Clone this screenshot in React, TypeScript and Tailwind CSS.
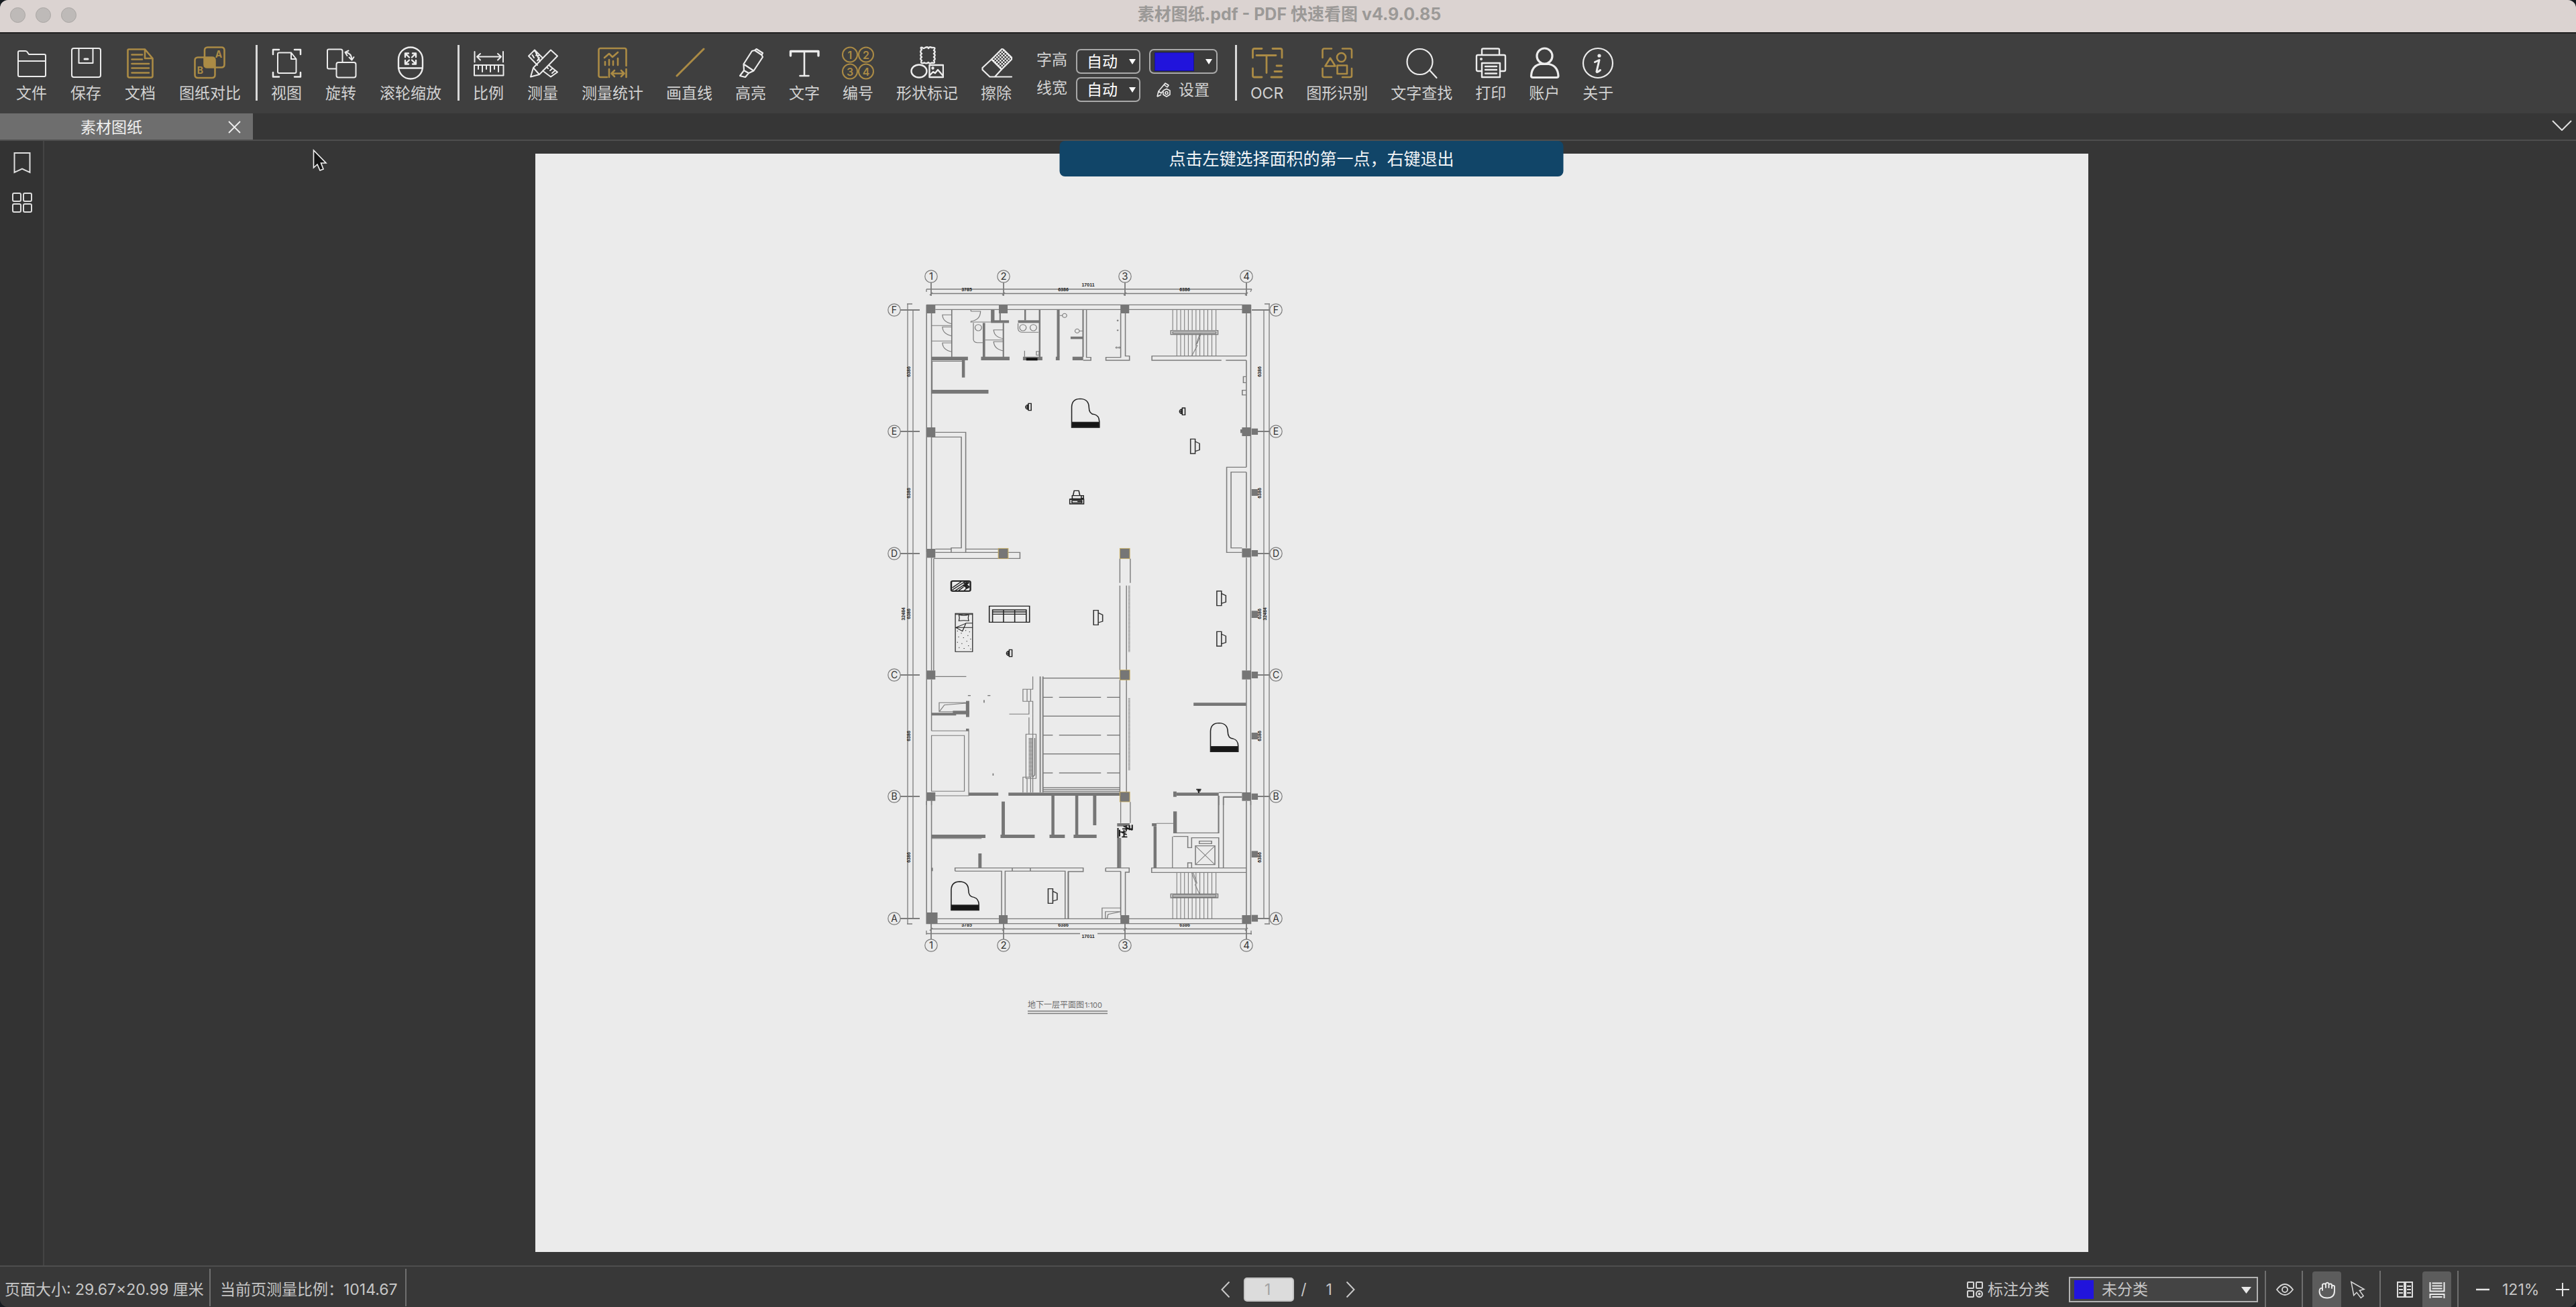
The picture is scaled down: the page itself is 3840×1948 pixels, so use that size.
import React from "react";

const GOLD = "#ab8b45";
const INK = "#ececec";

type IconProps = { color?: string; width?: number; children: React.ReactNode };

function Icon({ color = INK, width = 2, children }: IconProps) {
  return (
    <svg
      viewBox="0 0 50 50"
      className="-mx-0.5 size-[50px] shrink-0"
      fill="none"
      stroke={color}
      strokeWidth={width}
      strokeLinecap="round"
      strokeLinejoin="round"
      aria-hidden="true"
    >
      {children}
    </svg>
  );
}

function Tool({ label, children }: { label: string; children: React.ReactNode }) {
  return (
    <button type="button" className="flex min-w-[46px] shrink-0 flex-col items-center gap-1.5 whitespace-nowrap">
      {children}
      <span className="text-[23px] leading-7">{label}</span>
    </button>
  );
}

function Separator() {
  return <div className="h-[83px] w-[3px] shrink-0 bg-[#d9d9d9]" />;
}

function AutoSelect({ label }: { label: string }) {
  return (
    <label className="flex h-[37px] items-center gap-[13px]">
      <span className="pb-1.5 text-[23px] leading-7">{label}</span>
      <span className="relative">
        <select className="block h-[37px] w-24 appearance-none rounded-[7px] border-2 border-[#a9a9a9] bg-[#3b3b3b] pl-3.5 text-[23px] leading-7 text-white">
          <option>自动</option>
        </select>
        <svg viewBox="0 0 10 8" className="pointer-events-none absolute top-[15px] right-[7px] h-2 w-2.5" fill="#fff">
          <path d="M0 0h10L5 8z" />
        </svg>
      </span>
    </label>
  );
}

function Toolbar() {
  return (
    <div className="flex h-[119px] shrink-0 items-start bg-[#3f3f3f] pt-[17px] pl-6 text-[#d2d2d2]">
      <div className="mt-0.5 flex gap-[35px]">
        <Tool label="文件">
          <Icon>
            <path d="M5 43V9Q5 7 7 7H16Q18 7 19 9L21 12H44Q46 12 46 14V43Q46 45 44 45H7Q5 45 5 43ZM5 22H46" />
          </Icon>
        </Tool>
        <Tool label="保存">
          <Icon>
            <rect x="4" y="3" width="43" height="43" rx="3" />
            <path d="M14.5 3V25H35.5V3" />
            <path d="M23 19H28" strokeWidth="3" />
          </Icon>
        </Tool>
        <Tool label="文档">
          <Icon color={GOLD} width={2.6}>
            <path d="M8 4.500H32L43.500 18V44Q43.500 46.500 41 46.500H9Q6.500 46.500 6.500 44V6Q6.500 4.500 8 4.500ZM32 4.500V18H43.500M12.500 12.500H28M12.500 19.500H28M12.500 26H38M12.500 32.500H38M12.500 39.500H38" />
          </Icon>
        </Tool>
        <Tool label="图纸对比">
          <Icon color={GOLD} width={2.6}>
            <path d="M17 16V6Q17 1.500 21.500 1.500H42Q46.500 1.500 46.500 6V27Q46.500 31.500 42 31.500H33" />
            <path d="M16 16.500H7Q2.500 16.500 2.500 21V42.500Q2.500 47 7 47H28Q32.500 47 32.500 42.500V32" />
            <path d="M16.500 16.500H28Q32.500 16.500 32.500 21V31.500H21Q16.500 31.500 16.500 27Z" fill={GOLD} />
            <g fill={GOLD} stroke="none" fontSize="14" fontWeight="700" textAnchor="middle">
              <text x="38" y="17">A</text>
              <text x="10.500" y="41">B</text>
            </g>
          </Icon>
        </Tool>
      </div>
      <div className="w-[22px] shrink-0" />
      <Separator />
      <div className="mt-0.5 ml-5 flex gap-[35px]">
        <Tool label="视图">
          <Icon>
            <path d="M5 12V5H14M37 5H46V12M46 39V45.500H37M14 45.500H5V39" strokeWidth="2.500" />
            <path d="M14 9.500H32L39.500 19V38Q39.500 40 37.500 40H14Q12 40 12 38V11.500Q12 9.500 14 9.500ZM32 9.500V19H39.500" />
          </Icon>
        </Tool>
        <Tool label="旋转">
          <Icon>
            <path d="M18 33.500H7Q5 33.500 5 31.500V6.500Q5 4.500 7 4.500H25Q27.500 4.500 27.500 7V23" />
            <rect x="18.500" y="24" width="29" height="22.500" rx="3" />
            <path d="M32 9Q41 10 41.500 20M36.500 6.500L31.500 9L34.500 14M37.500 16.500L41.500 20.500L44.500 16" />
          </Icon>
        </Tool>
        <Tool label="滚轮缩放">
          <Icon width={2.4}>
            <rect x="7" y="1.500" width="36" height="47" rx="18" />
            <path d="M7 32.500H43M17 16V10.500H22M17.500 11L23 16.500M33 16V10.500H28M32.500 11L27 16.500M17 21V26.500H22M17.500 26L23 20.500M33 21V26.500H28M32.500 26L27 20.500" />
          </Icon>
        </Tool>
      </div>
      <div className="w-6 shrink-0" />
      <Separator />
      <div className="mt-0.5 ml-5 flex gap-[35px]">
        <Tool label="比例">
          <Icon>
            <path d="M4.500 8V23.500M47 8V23.500M8 15.500H44M13 11L8 15.500L13 20.500M39 11L44 15.500L39 20.500M4 28H47.500V43.500H4ZM10 28V34M16 28V38M22 28V34M28 28V38M34 28V34M40 28V38" />
          </Icon>
        </Tool>
        <Tool label="测量">
          <Icon>
            <path d="M37 5.500L47 14.500L20 42L7 45.500L11 32ZM11 32L20 42" />
            <path d="M21 22.500L13 5.500L4 14.500L17 28M25 17.500L13 5.500M12 17L9.500 13M15 13.500L19 14M17 21.500L20 17M34 28L47 38.500L37 45.500L25 36.500M33 33L31 31M36 36L39 33.500M39 40L43 36.500" />
          </Icon>
        </Tool>
        <Tool label="测量统计">
          <Icon color={GOLD} width={2.6}>
            <path d="M17 46H7Q4.500 46 4.500 43.500V5.500Q4.500 3 7 3H43Q45.500 3 45.500 5.500V29" />
            <path d="M13 17L20 11L25 16L33 9M14 23V28M20 20V28M26 22V28M33 18V28M20 34V46M45.500 34V46M24 40.500H42M28 36L23.500 40.500L28 45M38 36L42.500 40.500L38 45" />
          </Icon>
        </Tool>
      </div>
      <div className="mt-0.5 ml-[34px] flex gap-[34px]">
        <Tool label="画直线">
          <Icon color={GOLD} width={3}>
            <path d="M6 44L46 4" />
          </Icon>
        </Tool>
        <Tool label="高亮">
          <Icon width={2.2}>
            <path d="M31 6L41.500 13L43 16L29.500 36.500L14.500 26.500L27 7ZM31 6L33.500 4L43 10L41.500 13M14.500 26.500L15 36L22 40L29.500 36.500M15 36L9 44L17 46L22 40" />
          </Icon>
        </Tool>
        <Tool label="文字">
          <Icon width={2.6}>
            <path d="M18.500 44H31.500M25 8V44" />
            <path d="M4.500 14V7.500H46V14" strokeWidth="3.400" />
          </Icon>
        </Tool>
        <Tool label="编号">
          <Icon color={GOLD}>
            <circle cx="13" cy="12.500" r="11" />
            <circle cx="37" cy="12.500" r="11" />
            <circle cx="13" cy="37.500" r="11" />
            <circle cx="37" cy="37.500" r="11" />
            <g fill={GOLD} stroke="none" fontSize="16" fontWeight="600" textAnchor="middle">
              <text x="13" y="18.500">1</text>
              <text x="37" y="18.500">2</text>
              <text x="13" y="43.500">3</text>
              <text x="37" y="43.500">4</text>
            </g>
          </Icon>
        </Tool>
        <Tool label="形状标记">
          <Icon width={2.4}>
            <path d="M17 5Q14 1 18 2Q20 4 22 2Q26 0 27 3Q29 0 32 2Q39 1 35 6Q38.500 8 35 11Q38.500 13 35 16Q38.500 19 35 21Q38 26 32 24.500Q29 26.500 27 24Q24 26.500 21 24.500Q14 26.500 17 21Q13.500 19 17 16Q13.500 13 17 11Q13.500 8 17 5Z" />
            <ellipse cx="13" cy="37" rx="11.500" ry="9.500" />
            <rect x="28.500" y="28" width="20.500" height="18" />
            <path d="M29 43L34 38L37 40L41 35L48 43" />
            <circle cx="33.500" cy="32.500" r="1" />
          </Icon>
        </Tool>
        <Tool label="擦除">
          <Icon width={2.2}>
            <defs>
              <pattern id="eraser" width="5" height="5" patternUnits="userSpaceOnUse">
                <path d="M0 0h2.500v2.500h-2.500zM2.500 2.500h2.500v2.500h-2.500z" fill={INK} stroke="none" />
              </pattern>
            </defs>
            <path d="M33.500 4L18 19.500L33 34.500L48 19.500V16.500L35.500 4.500Z" fill="url(#eraser)" />
            <path d="M18 19.500L4.500 32V35L15.500 45.500H48M33 34.500L23 45.500" />
          </Icon>
        </Tool>
      </div>
      <div className="mt-1.5 ml-[37px] flex shrink-0 gap-[13px] whitespace-nowrap">
        <div className="flex flex-col gap-[5px]">
          <AutoSelect label="字高" />
          <AutoSelect label="线宽" />
        </div>
        <div className="flex flex-col gap-[5px]">
          <button
            type="button"
            aria-label="颜色"
            className="flex h-[37px] w-[102px] items-center justify-between rounded-[7px] border-2 border-[#a9a9a9] bg-[#3b3b3b] pr-1.5 pl-1.5"
          >
            <span className="h-7 w-[59px] border border-[#15128c] bg-[#2114dc]" />
            <svg viewBox="0 0 10 8" className="h-2 w-2.5" fill="#fff">
              <path d="M0 0h10L5 8z" />
            </svg>
          </button>
          <button type="button" className="flex h-[37px] items-center gap-2.5 pl-2.5">
            <svg viewBox="0 0 24 24" className="size-6" fill="none" stroke={INK} strokeWidth="1.600" strokeLinejoin="round">
              <path d="M2 22L4 14L14 2L19 5L17 8M4 14L8 17L10 14M2 22L8 19M12 4L17 8" />
              <path d="M16 10.500L21 13V19L16 22L11 19V13Z" />
              <circle cx="16" cy="16.500" r="2" />
            </svg>
            <span className="text-[23px] leading-7">设置</span>
          </button>
        </div>
      </div>
      <div className="w-[26px] shrink-0" />
      <Separator />
      <div className="mt-0.5 ml-5 flex gap-[34px]">
        <Tool label="OCR">
          <Icon color={GOLD} width={2.8}>
            <path d="M3.500 17V6Q3.500 3.500 6 3.500H17M33 3.500H44.500Q47 3.500 47 6V17M3.500 33V44Q3.500 46 6 46H17M9 13.500H38M24 13.500V39.500M39 29H46.500M36 37.500H46.500M31 46H47" />
          </Icon>
        </Tool>
        <Tool label="图形识别">
          <Icon color={GOLD} width={2.6}>
            <path d="M3.500 17V6Q3.500 3.500 6 3.500H17M33 3.500H44.500Q47 3.500 47 6V17M3.500 33V44Q3.500 46 6 46H17M33 46H44.500Q47 46 47 44V33M15 17.500L22.500 29.500H7.500Z" />
            <circle cx="31.500" cy="16.500" r="6.500" />
            <rect x="25.500" y="28.500" width="14.500" height="12.500" />
          </Icon>
        </Tool>
        <Tool label="文字查找">
          <Icon width={2.2}>
            <circle cx="22.500" cy="23" r="19" />
            <path d="M37 35.500L47.500 47" />
          </Icon>
        </Tool>
        <Tool label="打印">
          <Icon width={2.4}>
            <path d="M12 13V5Q12 3.500 14 3.500H36Q38 3.500 38 5V13M12 37H6Q4 37 4 35V15Q4 13 6 13H45Q47 13 47 15V35Q47 37 45 37H39M12 25H39V46H12ZM17 30H34M17 35H34M17 40.500H34" />
            <circle cx="11" cy="19" r="0.800" />
          </Icon>
        </Tool>
        <Tool label="账户">
          <Icon width={3.2}>
            <circle cx="25.500" cy="14.500" r="11.500" />
            <path d="M19 26.500H32Q45 29 46 44Q46 46.500 43.500 46.500H8Q5.500 46.500 5.500 44Q6.500 29 19 26.500Z" />
          </Icon>
        </Tool>
        <Tool label="关于">
          <Icon width={2.2}>
            <circle cx="25" cy="25" r="22" />
            <circle cx="27" cy="14" r="2.600" fill={INK} stroke="none" />
            <path d="M20.500 23.500L27 20.500L23 37.500Q23 40 28.500 35.500" strokeWidth="3" />
          </Icon>
        </Tool>
      </div>
    </div>
  );
}

/* ---------- floor plan ---------- */

const WALL = "#7c7c7c";

function Piano({ x, y }: { x: number; y: number }) {
  return (
    <g transform={`translate(${x} ${y})`} stroke="#222">
      <path d="M1 129V38Q2 1 32 1Q63 2 64 38Q64 70 84 71Q101 76 102 103V129Z" />
      <rect x="2" y="106" width="99" height="22" fill="#161616" />
    </g>
  );
}

function Stool({ x, y }: { x: number; y: number }) {
  return (
    <g transform={`translate(${x} ${y})`} stroke="#222">
      <path d="M10 1H20V32H10ZM10 6Q0 8 0 17Q0 26 10 28M10 17H2M7 9V26" />
    </g>
  );
}

function Screen({ x, y }: { x: number; y: number }) {
  return (
    <g transform={`translate(${x} ${y})`} stroke="#333">
      <path d="M0 0H17V65H0ZM17 11L33 20V49L17 55" />
    </g>
  );
}

type Box = [number, number, number, number];

function Solids({ boxes }: { boxes: Box[] }) {
  return (
    <g fill="#767676" stroke="none">
      {boxes.map(([x, y, w, h]) => (
        <rect key={`${x}-${y}`} x={x} y={y} width={w} height={h} />
      ))}
    </g>
  );
}

function GoldColumns({ boxes }: { boxes: Box[] }) {
  return (
    <g fill="#767676" stroke="#c9ad5c" strokeWidth="2.400">
      {boxes.map(([x, y, w, h]) => (
        <rect key={`${x}-${y}`} x={x} y={y} width={w} height={h} />
      ))}
    </g>
  );
}

const stairXs = [1113, 1127, 1141, 1155, 1169, 1183, 1197, 1212, 1226, 1241];
const stairs = (xs: number[], from: number, to: number) => xs.map((x) => `M${x} ${from}V${to}`).join("");

const northSolids: Box[] = [
  [199, 193, 32, 38], [463, 193, 32, 38], [907, 193, 32, 38], [1351, 193, 32, 38],
  [199, 741, 32, 44], [1351, 741, 32, 39], [1386, 746, 23, 28], [1345, 750, 8, 16],
  [1386, 1017, 23, 30], [199, 1284, 32, 40], [1351, 1282, 32, 40], [1386, 1290, 23, 28],
  [434, 214, 13, 55], [465, 214, 5, 50], [434, 262, 66, 12], [404, 274, 9, 152],
  [533, 262, 80, 12], [556, 214, 6, 48], [609, 214, 6, 212], [675, 214, 10, 212],
  [217, 425, 133, 16], [398, 425, 104, 16], [551, 425, 71, 16], [671, 425, 14, 16],
  [732, 425, 39, 16], [725, 335, 45, 11], [768, 214, 5, 212], [328, 441, 11, 77],
  [217, 573, 208, 17], [477, 274, 5, 152], [289, 214, 4, 212],
];

const middleSolids: Box[] = [
  [199, 598, 32, 40], [1351, 598, 32, 40], [1386, 603, 23, 30], [1386, 331, 23, 32],
  [1386, 876, 23, 30], [199, 1143, 32, 38], [1351, 1143, 32, 38], [1386, 1148, 23, 28],
  [343, 734, 12, 72], [217, 787, 90, 12], [295, 778, 60, 16], [343, 858, 11, 10],
  [353, 1144, 108, 14], [498, 1144, 407, 14], [1174, 742, 192, 14],
  [1100, 1139, 12, 24], [1112, 1144, 154, 14], [625, 630, 280, 4], [625, 800, 280, 4],
  [625, 969, 280, 4], [625, 1120, 280, 4], [625, 1129, 280, 4], [625, 716, 35, 4], [683, 716, 153, 4],
  [858, 716, 47, 4], [625, 885, 35, 4], [683, 885, 153, 4], [858, 885, 47, 4],
  [625, 1054, 35, 4], [683, 1054, 153, 4], [858, 1054, 47, 4],
  [350, 708, 10, 4], [422, 708, 10, 4], [407, 730, 4, 12], [440, 1058, 4, 10],
];

const southSolids: Box[] = [
  [199, 660, 40, 50], [463, 672, 32, 38], [907, 672, 32, 38], [1351, 672, 32, 38],
  [1386, 671, 23, 30], [1386, 385, 23, 29], [473, 164, 12, 150], [655, 138, 11, 175],
  [742, 138, 11, 175], [807, 138, 12, 132], [217, 312, 197, 15], [469, 312, 125, 15],
  [648, 312, 56, 15], [736, 312, 84, 15], [388, 396, 12, 65], [217, 460, 5, 15],
  [895, 261, 46, 14], [895, 325, 11, 136], [1022, 261, 17, 13], [1028, 274, 11, 187],
  [1100, 208, 13, 98], [1263, 138, 5, 168], [906, 476, 4, 196], [714, 476, 5, 212],
];

const axes = [
  { name: "F", y: 462 }, { name: "E", y: 643 }, { name: "D", y: 825 },
  { name: "C", y: 1006 }, { name: "B", y: 1187 }, { name: "A", y: 1369 },
];
const columns = [
  { name: "1", x: 1388 }, { name: "2", x: 1496 }, { name: "3", x: 1677 }, { name: "4", x: 1858 },
];
const spans = [{ t: "3785", x: 1441 }, { t: "6386", x: 1585 }, { t: "6386", x: 1766 }];
const bays = [554, 735, 915, 1097, 1278];

function FloorPlan() {
  return (
    <svg viewBox="798 229 2315 1637" className="block size-full" fill="none" stroke={WALL} role="img" aria-label="地下一层平面图">
      <g strokeWidth="1.500">
        {columns.map((c) => (
          <g key={c.name}>
            <circle cx={c.x} cy="412" r="9.200" strokeWidth="1.200" />
            <circle cx={c.x} cy="1409" r="9.200" strokeWidth="1.200" />
            <path d={`M${c.x} 421V441M${c.x} 1377V1400`} strokeWidth="1.800" />
            <path d={`M${c.x - 2} 440l4-4M${c.x - 2} 1387l4-4`} />
          </g>
        ))}
        {axes.map((a) => (
          <g key={a.name}>
            <circle cx="1333" cy={a.y} r="9.200" strokeWidth="1.200" />
            <circle cx="1902" cy={a.y} r="9.200" strokeWidth="1.200" />
            <path d={`M1342 ${a.y}H1371M1866 ${a.y}H1893`} strokeWidth="1.800" />
          </g>
        ))}
        <path
          d="M1381 431H1866M1381 431V435M1866 431L1864 435M1388 437.500H1858M1388 1384.500H1858M1381 1391.500H1610M1636 1391.500H1866M1381 1387V1393M1865 1387V1393M1353 453V1377M1352 453H1360M1352 1377H1360M1361 461V1370M1884 461V1370M1892 453V1377M1885 453H1893M1885 1377H1893"
          strokeWidth="1.300"
        />
      </g>
      <g fill="#333" stroke="none" textAnchor="middle" fontSize="15">
        {columns.map((c) => (
          <React.Fragment key={c.name}>
            <text x={c.x} y="417">{c.name}</text>
            <text x={c.x} y="1414">{c.name}</text>
          </React.Fragment>
        ))}
        {axes.map((a) => (
          <React.Fragment key={a.name}>
            <text x="1333" y={a.y + 5} fontSize="14">{a.name}</text>
            <text x="1902" y={a.y + 5} fontSize="14">{a.name}</text>
          </React.Fragment>
        ))}
      </g>
      <g fill="#222" stroke="none" textAnchor="middle" fontSize="7" fontWeight="700" fontFamily="'Liberation Sans', sans-serif">
        {spans.map((s) => (
          <React.Fragment key={s.x}>
            <text x={s.x} y="434">{s.t}</text>
            <text x={s.x} y="1381">{s.t}</text>
          </React.Fragment>
        ))}
        <text x="1622" y="427">17011</text>
        <text x="1622" y="1398">17011</text>
        {bays.map((y) => (
          <React.Fragment key={y}>
            <text transform={`translate(1357 ${y}) rotate(-90)`}>6386</text>
            <text transform={`translate(1880 ${y}) rotate(-90)`}>6386</text>
          </React.Fragment>
        ))}
        <text transform="translate(1349 915) rotate(-90)">32484</text>
        <text transform="translate(1888 915) rotate(-90)">32484</text>
      </g>

      <g transform="translate(1300 390) scale(0.40816 0.33333)" strokeWidth="3.800">
        <path d="M199 193H1383M231 214H1367M199 193V1300M217 231V1284M1383 193V1300M1367 231V422M1367 441V919M1367 941V1280" />
        <path
          d="M217 286H291M217 355H291M291 238H257Q258 270 291 278M291 292H257Q258 324 291 332M291 363H257Q258 395 291 403M361 222H396Q395 262 361 266M361 214V222M361 266V272M361 270H434M370 274V348Q372 362 384 362H404M413 350H480M480 305H444Q446 338 480 344M480 358H444Q446 392 480 399M533 276V300Q535 316 550 316H608M685 241H695M757 310H769M557 398V425M600 401H610V418H600Z"
          strokeWidth="3"
        />
        <g strokeWidth="3">
          <ellipse cx="388" cy="295" rx="12" ry="14" />
          <ellipse cx="551" cy="295" rx="12" ry="14" />
          <ellipse cx="589" cy="295" rx="12" ry="14" />
          <ellipse cx="703" cy="241" rx="8" ry="9" />
          <ellipse cx="749" cy="310" rx="8" ry="9" />
          <ellipse cx="897" cy="263" rx="2" ry="2" />
          <ellipse cx="897" cy="307" rx="2" ry="2" />
          <ellipse cx="893" cy="384" rx="3" ry="3" />
          <ellipse cx="903" cy="384" rx="3" ry="3" />
        </g>
        <path d="M783 214V428H799V441H771M908 231V428H854V441H940V422H925V231M1367 422H1022V441H1276M1292 441H1367M217 445H330M219 445V574M1366 514H1356V541H1366M1367 575H1352V596H1367" />
        <path d={stairs([1098, ...stairXs, 1256], 214, 308) + stairs([...stairXs, 1256], 327, 420)} strokeWidth="2.600" />
        <path d="M1091 308H1263V326H1091ZM1098 314H1256V321H1098Z" />
        <path d="M1197 322L1183 372L1188 375L1168 420M1201 322L1187 368" strokeWidth="2.600" />
        <path d="M231 763H342V1300M217 784H326V1280H289V1300M231 1285H289M342 1285H463M231 1300H461M497 1300H540V1327H225M1367 919H1295V1300H1351M1367 941H1311V1280H1351" />
        <Solids boxes={northSolids} />
        <GoldColumns boxes={[[461, 1282, 36, 46], [905, 1282, 36, 46]]} />
        <rect x="563" y="430" width="41" height="12" fill="#111" stroke="none" />
        <Piano x={728} y={612} />
        <Stool x={561} y={633} />
        <Stool x={1123} y={653} />
        <Screen x={1163} y={793} />
        <g stroke="#222">
          <path d="M738 1024H755L759 1046H734ZM731 1046H764V1060H731ZM722 1062H773V1083H722ZM764 1046H772V1058H764M730 1068H766V1078H730Z" />
          <path d="M724 1062H770M750 1072H766" strokeWidth="6" />
        </g>
      </g>

      <g transform="translate(1300 800) scale(0.40816 0.33333)" strokeWidth="3.800">
        <path d="M199 70V1200M217 94V598M225 98V598M217 638V868M217 1180V1200M1383 70V1200M1367 94V598M1367 638V1143M905 98V206M943 98V206M905 218V596M929 218V596M905 640V1143M929 640V1143M231 625H344" strokeWidth="3.500" />
        <path d="M939 220V515M939 722V1043" strokeWidth="7" strokeDasharray="3 3" />
        <path
          d="M587 625V682H551V736H587V1143M566 682V736M579 682V736M573 736V793H501M573 808V883M562 883H599V1081H562ZM551 1143V1075H579V1143M566 1081V1143M245 742H344V782H245ZM247 780L264 752L344 744M217 868H353V1158H231M217 889H337V1138H217Z"
          strokeWidth="3"
        />
        <path d="M614 625V1143M624 625V1143" strokeWidth="4.500" />
        <path d="M580 900V1075" strokeWidth="16" strokeDasharray="4 2" />
        <path d="M594 900V1065L586 1075" />
        <path d="M1266 1144H1351M1351 1165H1283V1200M1266 1158V1200M625 1139H905" />
        <Solids boxes={middleSolids} />
        <GoldColumns boxes={[[905, 596, 36, 44], [905, 1141, 36, 44]]} />
        <path d="M1184 1130H1202M1188 1136H1200M1193 1130V1146" stroke="#222" strokeWidth="5" />
        <g stroke="#222">
          <rect x="289" y="198" width="70" height="45" rx="6" strokeWidth="6" />
          <path d="M293 228L326 200M293 238L340 200M304 241L352 202M316 241L334 224M336 241L354 222" />
          <path d="M334 204L356 226M332 216L352 230M344 200V232M354 204L334 222" strokeWidth="6" />
          <path d="M428 310H575V382H428ZM440 382V327H563V382M480 327V382M521 327V382M440 336H563M440 346H563" />
          <path
            d="M304 343H367V514H304ZM304 347H367M317 349Q335 354 353 349Q349 362 353 376Q335 372 317 376Q321 362 317 349ZM304 406H367M367 386H343L330 422L306 406L341 388"
            strokeWidth="3"
          />
          <path
            d="M312 420v3M326 430v3M342 418v3M356 424v3M316 446v3M334 450v3M350 440v3M360 456v3M312 470v3M328 476v3M346 466v3M318 494v3M336 498v3M352 486v3M360 500v3"
            strokeWidth="3"
          />
        </g>
        <Stool x={491} y={504} />
        <Screen x={809} y={329} />
        <Screen x={1259} y={243} />
        <Screen x={1259} y={424} />
        <Piano x={1235} y={832} />
      </g>

      <g transform="translate(1300 1140) scale(0.40816 0.33333)" strokeWidth="3.800">
        <path d="M199 162V710H1383V162M217 162V660M239 688H1351M1367 162V672M303 475V461H771V477H716M303 475H473V672M486 672V475H705V688M512 461V475M578 461V475M853 461H939V480H925V672M853 461V476H908" />
        <path d="M217 329H400M908 166V260M943 166V260M908 326V461M908 640H840V688M908 656H852V688M858 688L862 668L908 656M1039 262H1100M1097 320V461" strokeWidth="3.200" />
        <path d="M1100 304H1266M1100 320H1153V370H1167V326H1266V461M1283 142V461M1283 142H1351M1153 461V438H1167V461M1181 362H1252V446H1181ZM1195 341H1240V352H1195ZM1367 461H1021V481H1367" />
        <path d="M1181 362L1252 446M1252 362L1181 446" strokeWidth="2.600" />
        <path d={stairs([...stairXs, 1256], 481, 576) + stairs([1098, ...stairXs], 594, 688)} strokeWidth="2.600" />
        <path d="M1091 577H1263V594H1091ZM1098 582H1256V590H1098Z" />
        <path d="M1168 483L1183 530L1180 536L1197 580M1173 483L1187 530" strokeWidth="2.600" />
        <Solids boxes={southSolids} />
        <path d="M898 282V326M904 290V320M914 286H952M918 274L950 292M928 270V296M940 270V292M950 268V292M910 300L930 312M920 292V320M912 322H932M906 300H928" stroke="#1c1c1c" strokeWidth="5" />
        <Piano x={288} y={521} />
        <Screen x={643} y={554} />
      </g>
      <g fill="#6c6c6c" stroke="none">
        <text x="1532" y="1502" fontSize="12">地下一层平面图</text>
        <text x="1617" y="1502" fontSize="11">1:100</text>
      </g>
      <path d="M1532 1507H1651M1532 1510.500H1651" strokeWidth="1.300" />
    </svg>
  );
}

function Divider() {
  return <div className="h-14 w-0.5 shrink-0 self-end bg-[#6f6f6f]" />;
}

function StatusBar() {
  return (
    <footer className="grid h-[62px] shrink-0 grid-cols-[1fr_auto_1fr] items-center border-t-2 border-[#4e4e4e] bg-[#383838] pt-1.5 text-[23px] leading-7 whitespace-nowrap text-[#c6c6c6]">
      <div className="-mt-1.5 flex h-full items-center">
        <span className="w-[312px] shrink-0 pt-1.5 pl-[7px]">页面大小: 29.67×20.99 厘米</span>
        <Divider />
        <span className="w-[290px] shrink-0 pt-1.5 pl-3.5">当前页测量比例：1014.67</span>
        <Divider />
      </div>
      <div className="flex items-center">
        <button type="button" aria-label="上一页">
          <svg viewBox="0 0 13 24" className="h-6 w-[13px]" fill="none" stroke="#c9c9c9" strokeWidth="2">
            <path d="M12.500 0.500L1.500 12L12.500 23.500" />
          </svg>
        </button>
        <input
          aria-label="页码"
          defaultValue="1"
          className="ml-[21px] h-9 w-[75px] rounded-[5px] border-2 border-[#c4c4c4] bg-[#dcdcdc] pr-1 text-center text-[23px] text-[#a3a3a3]"
        />
        <span className="ml-2.5">/</span>
        <span className="ml-[29px]">1</span>
        <button type="button" aria-label="下一页" className="ml-[21px]">
          <svg viewBox="0 0 13 24" className="h-6 w-[13px]" fill="none" stroke="#c9c9c9" strokeWidth="2">
            <path d="M0.500 0.500L11.500 12L0.500 23.500" />
          </svg>
        </button>
      </div>
      <div className="flex h-full items-center justify-end pr-2.5">
        <button type="button" className="flex items-center gap-[7px]">
          <svg viewBox="0 0 24 24" className="size-6" fill="none" stroke="#d6d6d6" strokeWidth="2">
            <rect x="1" y="1" width="9" height="9" rx="1" />
            <rect x="14" y="1" width="9" height="9" rx="1" />
            <rect x="1" y="14" width="9" height="9" rx="1" />
            <circle cx="18.500" cy="18.500" r="4.500" />
            <circle cx="18.500" cy="18.500" r="1" />
          </svg>
          标注分类
        </button>
        <div className="relative ml-[29px]">
          <select
            aria-label="标注分类"
            className="block h-[38px] w-[282px] appearance-none border-2 border-[#b3b3b3] bg-[#444] pl-[47px] text-[23px] leading-7"
          >
            <option>未分类</option>
          </select>
          <span className="pointer-events-none absolute top-[5px] left-2 h-7 w-[29px] bg-[#2114dc]" />
          <svg viewBox="0 0 15 10" className="pointer-events-none absolute top-[15px] right-2.5 h-2.5 w-[15px]" fill="#e8e8e8">
            <path d="M0 0h15L7.500 10z" />
          </svg>
        </div>
        <div className="w-2.5" />
        <Divider />
        <button type="button" aria-label="显示标注" className="mr-3 ml-[15px]">
          <svg viewBox="0 0 26 20" className="h-5 w-[26px]" fill="none" stroke="#d6d6d6" strokeWidth="1.800">
            <path d="M1 10Q7 2 13 2Q19 2 25 10Q19 18 13 18Q7 18 1 10Z" />
            <circle cx="13" cy="10" r="4" />
          </svg>
        </button>
        <Divider />
        <button type="button" aria-label="手形工具" className="ml-3.5 flex h-[55px] w-[43px] items-center justify-center self-end rounded-t-[4px] bg-[#5c5c5c]">
          <svg viewBox="0 0 26 26" className="size-[26px]" fill="none" stroke="#ededed" strokeWidth="1.900" strokeLinecap="round" strokeLinejoin="round">
            <path d="M6 13V10Q2 9 1.500 14Q1.500 24.500 13 24.500Q24 24.500 24 14V7Q22.500 5 20 7V10V4.500Q18 2.500 15.500 4.500V9V3Q13.500 0.500 11 3V9V4.500Q8.500 2 6 4.500V10" />
          </svg>
        </button>
        <button type="button" aria-label="选择工具" className="ml-[13px]">
          <svg viewBox="0 0 24 28" className="h-7 w-[23px]" fill="none" stroke="#d6d6d6" strokeWidth="1.600">
            <path d="M2 2L6 23L10.500 18.500L17 27L21 24L15 15.500L22 13.500Z" />
          </svg>
        </button>
        <div className="w-[21px]" />
        <Divider />
        <button type="button" aria-label="双页" className="ml-6">
          <svg viewBox="0 0 24 24" className="size-6" fill="none" stroke="#dedede" strokeWidth="2">
            <path d="M1 1H11V23H1ZM13 1H23V23H13ZM3 7H9M3 12H9M3 17H9M15 7H21M15 12H21M15 17H21" />
          </svg>
        </button>
        <button type="button" aria-label="连续滚动" className="mr-[9px] ml-3.5 flex h-[55px] w-[43px] items-center justify-center self-end rounded-t-[4px] bg-[#5c5c5c]">
          <svg viewBox="0 0 24 24" className="size-6" fill="none" stroke="#ededed" strokeWidth="2">
            <path d="M1.500 0V13.500H22.500V0M4.500 1.500H19.500M4.500 5.500H19.500M4.500 9.500H19.500M1.500 24V18H22.500V24M4.500 22H19.500" />
          </svg>
        </button>
        <Divider />
        <button type="button" aria-label="缩小" className="ml-[26px]">
          <svg viewBox="0 0 20 20" className="size-5" stroke="#e4e4e4" strokeWidth="2.500">
            <path d="M0 10H20" />
          </svg>
        </button>
        <span className="ml-[19px] w-[55px]">121%</span>
        <button type="button" aria-label="放大" className="ml-[25px]">
          <svg viewBox="0 0 20 20" className="size-5" stroke="#e4e4e4" strokeWidth="2">
            <path d="M0 10H20M10 0V20" />
          </svg>
        </button>
      </div>
    </footer>
  );
}

export default function App() {
  return (
    <div className="h-screen bg-[#161b20] font-[Inter,'Noto_Sans_CJK_SC',sans-serif]">
      <div className="relative flex h-full flex-col overflow-hidden rounded-[12px] bg-[#363636]">
        <header className="relative flex h-[50px] shrink-0 items-center justify-center border-b-2 border-[#1f1f1f] bg-[#dbd3d1] pb-1.5 pl-1">
          <div className="absolute top-[11px] left-[15px] flex gap-[15px]">
            <span className="size-[23px] rounded-full border border-[#a9a5a3] bg-[#bebab8]" />
            <span className="size-[23px] rounded-full border border-[#a9a5a3] bg-[#bebab8]" />
            <span className="size-[23px] rounded-full border border-[#a9a5a3] bg-[#bebab8]" />
          </div>
          <h1 className="text-[25px] leading-8 font-bold text-[#9b9997]">素材图纸.pdf - PDF 快速看图 v4.9.0.85</h1>
        </header>
        <Toolbar />
        <div className="flex h-[41px] shrink-0 items-center justify-between border-b-2 border-[#4e4e4e] bg-[#363636]">
          <div className="flex h-full w-[377px] items-center justify-end gap-32 bg-[#6e6e6e] pt-0.5 pr-[18px] text-[#f0f0f0]">
            <span className="text-[23px] leading-7">素材图纸</span>
            <button type="button" aria-label="关闭">
              <svg viewBox="0 0 19 19" className="size-[19px]" stroke="#eee" strokeWidth="1.800">
                <path d="M1 1L18 18M18 1L1 18" />
              </svg>
            </button>
          </div>
          <button type="button" aria-label="展开" className="mr-1.5 pb-1">
            <svg viewBox="0 0 30 16" className="h-4 w-[30px]" fill="none" stroke="#e0e0e0" strokeWidth="2">
              <path d="M1 1L15 15L29 1" />
            </svg>
          </button>
        </div>
        <div className="flex min-h-0 flex-1">
          <nav className="flex w-[66px] shrink-0 flex-col items-center gap-7 border-r-2 border-[#444] bg-[#333] pt-[17px] pl-0.5">
            <button type="button" aria-label="书签">
              <svg viewBox="0 0 30 32" className="h-8 w-[30px]" fill="none" stroke="#dedede" strokeWidth="2">
                <path d="M3.500 1H26.500V30L15 24.500L3.500 30Z" />
              </svg>
            </button>
            <button type="button" aria-label="缩略图">
              <svg viewBox="0 0 30 30" className="size-[30px]" fill="none" stroke="#dedede" strokeWidth="2">
                <rect x="1" y="1" width="12" height="12" rx="2" />
                <rect x="17" y="1" width="12" height="12" rx="2" />
                <rect x="1" y="17" width="12" height="12" rx="2" />
                <rect x="17" y="17" width="12" height="12" rx="2" />
              </svg>
            </button>
          </nav>
          <main className="flex min-w-0 flex-1 justify-center bg-[#363636] pt-[19px] pb-5 pl-1">
            <div className="relative aspect-[2315/1637] h-full bg-[#ebebeb]">
              <FloorPlan />
              <div
                role="status"
                className="absolute -top-[19px] left-1/2 flex h-[53px] w-[751px] -translate-x-1/2 items-center justify-center rounded-[8px] bg-[#114568] text-[25px] leading-8 text-[#f2f4f6]"
              >
                点击左键选择面积的第一点，右键退出
              </div>
            </div>
          </main>
        </div>
        <StatusBar />
        <svg viewBox="0 0 22 34" className="pointer-events-none absolute top-[222px] left-[466px] h-[34px] w-[22px]" fill="#161616" stroke="#f2f2f2" strokeWidth="1.600">
          <path d="M1.500 2V28L7 23L11 32L16 30L12.500 21H20Z" />
        </svg>
      </div>
    </div>
  );
}
